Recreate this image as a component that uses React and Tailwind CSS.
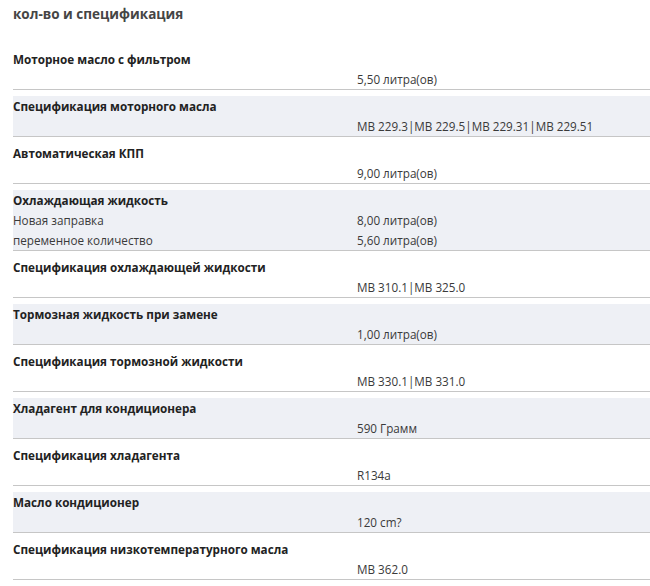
import React from "react";

const rows = [
  { label: "Моторное масло с фильтром", lines: [["", "5,50 литра(ов)"]] },
  { label: "Спецификация моторного масла", lines: [["", "MB 229.3|MB 229.5|MB 229.31|MB 229.51"]], gray: true },
  { label: "Автоматическая КПП", lines: [["", "9,00 литра(ов)"]] },
  {
    label: "Охлаждающая жидкость",
    lines: [
      ["Новая заправка", "8,00 литра(ов)"],
      ["переменное количество", "5,60 литра(ов)"],
    ],
    gray: true,
  },
  { label: "Спецификация охлаждающей жидкости", lines: [["", "MB 310.1|MB 325.0"]] },
  { label: "Тормозная жидкость при замене", lines: [["", "1,00 литра(ов)"]], gray: true },
  { label: "Спецификация тормозной жидкости", lines: [["", "MB 330.1|MB 331.0"]] },
  { label: "Хладагент для кондиционера", lines: [["", "590 Грамм"]], gray: true },
  { label: "Спецификация хладагента", lines: [["", "R134a"]] },
  { label: "Масло кондиционер", lines: [["", "120 cm?"]], gray: true },
  { label: "Спецификация низкотемпературного масла", lines: [["", "MB 362.0"]] },
];

export default function App() {
  return (
    <div
      className="w-[650px] h-[586px] overflow-hidden bg-white text-[#3a3a3a]"
      style={{ fontFamily: "'Open Sans', 'Noto Sans', sans-serif" }}
    >
      <div className="pl-[13px] pt-[4px]">
        <h1 className="text-[13.5px] leading-[20px] font-bold text-[#454545]">кол-во и спецификация</h1>
        <div className="pt-[19px]">
          {rows.map((r, i) => (
            <div
              key={i}
              className={`mt-[6px] border-b border-[#c6c6c6] text-[11.7px] leading-[20px] ${r.gray ? "bg-[#eef0f5]" : ""}`}
            >
              <div className="font-bold text-[#222]">{r.label}</div>
              {r.lines.map((l, j) => (
                <div key={j} className="grid grid-cols-[344px_1fr]">
                  <div>{l[0]}</div>
                  <div>{l[1]}</div>
                </div>
              ))}
            </div>
          ))}
        </div>
      </div>
    </div>
  );
}
